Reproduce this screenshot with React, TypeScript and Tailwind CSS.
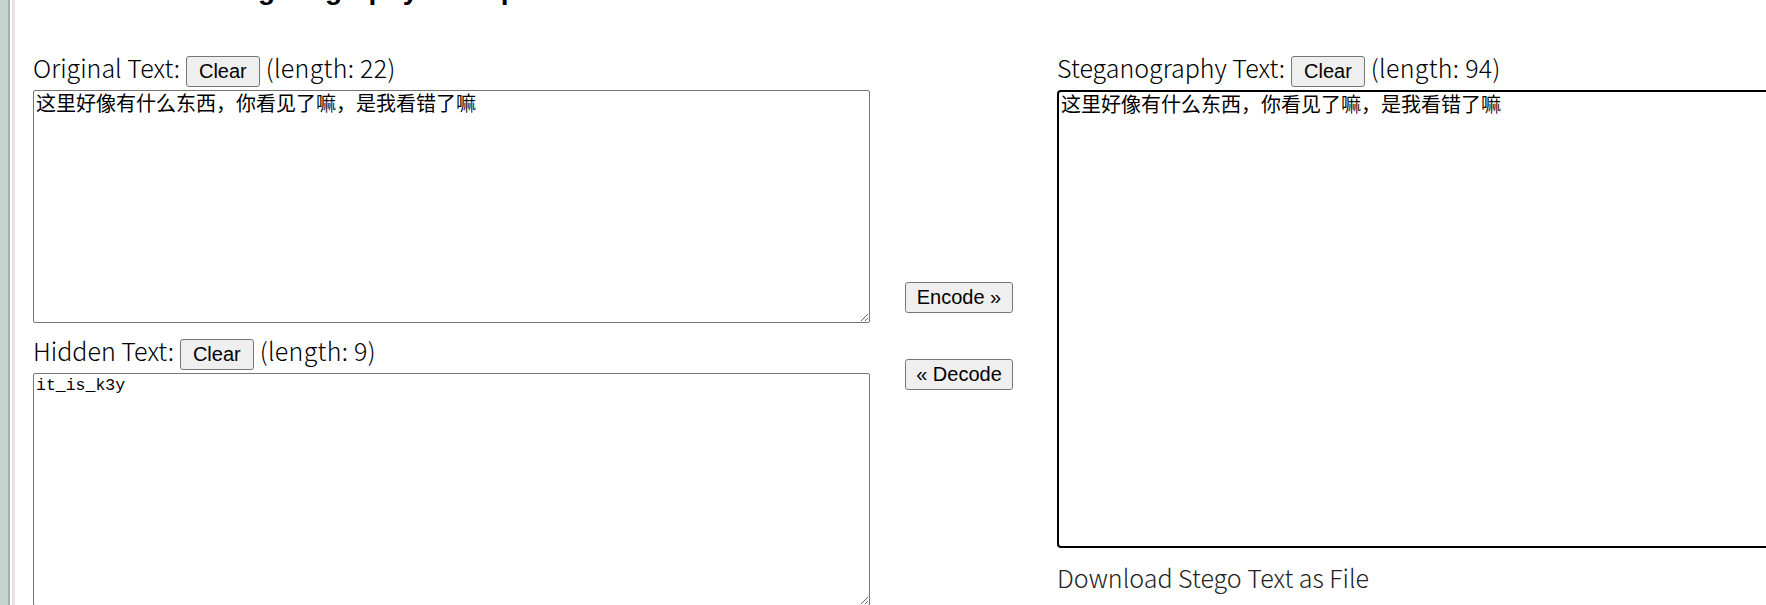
import { useState } from 'react';

const cjk = '"Noto Sans CJK JP", "Noto Sans CJK SC", sans-serif';

function ClearButton({ onClick }: { onClick?: () => void }) {
  return (
    <button
      onClick={onClick}
      className="h-[31px] px-[12px] py-[3px] leading-[23px] text-[20px] text-black bg-[#efefef] border border-[#767676] rounded-[3px] font-['Liberation_Sans',Arial,sans-serif]"
    >
      Clear
    </button>
  );
}

function LabelRow({ label, length, onClear }: { label: string; length: number; onClear: () => void }) {
  return (
    <div className="flex items-baseline gap-[6px] text-[25px] leading-[20px] font-light text-black" style={{ fontFamily: cjk }}>
      <span>{label}</span>
      <ClearButton onClick={onClear} />
      <span className="tracking-[0.3px]">(length: {length})</span>
    </div>
  );
}

export default function App() {
  const [original, setOriginal] = useState('这里好像有什么东西，你看见了嘛，是我看错了嘛');
  const [hidden, setHidden] = useState('it_is_k3y');
  const [stego, setStego] = useState('这里好像有什么东西，你看见了嘛，是我看错了嘛');

  return (
    <div className="flex h-[605px] w-[1766px] overflow-hidden bg-white">
      {/* window edge */}
      <div className="flex shrink-0">
        <div className="w-[8px] bg-[#c6d4d1]" />
        <div className="w-[2px] bg-[#a6b2af]" />
        <div className="w-[2px] bg-white" />
        <div className="w-[3px] bg-[#e4e4e4]" />
      </div>

      <div className="pl-[18px] -mt-[24px]">
        <h1 className="h-[28px] leading-[28px] text-[28px] font-bold text-black whitespace-nowrap font-['Liberation_Sans',Arial,sans-serif]">
          Unicode Text Steganography Example
        </h1>

        <div className="mt-[52px] flex items-start">
          {/* left column */}
          <div className="w-[837px] shrink-0">
            <LabelRow label="Original Text:" length={22} onClear={() => setOriginal('')} />
            <textarea
              value={original}
              onChange={e => setOriginal(e.target.value)}
              className="mt-[3px] block w-[837px] h-[233px] p-[2px] text-[20px] leading-[20px] text-black border border-[#767676] rounded-[2px] outline-none"
              style={{ fontFamily: cjk }}
            />

            <div className="mt-[16px]">
              <LabelRow label="Hidden Text:" length={9} onClear={() => setHidden('')} />
            </div>
            <textarea
              value={hidden}
              onChange={e => setHidden(e.target.value)}
              className="mt-[3px] block w-[837px] h-[233px] p-[2px] text-[16.5px] leading-[20px] text-black border border-[#767676] rounded-[2px] outline-none font-['Liberation_Mono',monospace]"
            />
          </div>

          {/* middle buttons */}
          <div className="ml-[35px] w-[108px] shrink-0 pt-[226px] flex flex-col font-['Liberation_Sans',Arial,sans-serif]">
            <button className="h-[31px] w-[108px] py-[3px] leading-[23px] text-[20px] text-black bg-[#efefef] border border-[#767676] rounded-[3px]">
              Encode »
            </button>
            <button className="mt-[46px] h-[31px] w-[108px] py-[3px] leading-[23px] text-[20px] text-black bg-[#efefef] border border-[#767676] rounded-[3px]">
              « Decode
            </button>
          </div>

          {/* right column */}
          <div className="ml-[44px] w-[837px] shrink-0">
            <LabelRow label="Steganography Text:" length={94} onClear={() => setStego('')} />
            <textarea
              value={stego}
              onChange={e => setStego(e.target.value)}
              className="mt-[3px] block w-[837px] h-[458px] p-[2px] text-[20px] leading-[20px] text-black border-2 border-black rounded-[4px] outline-none"
              style={{ fontFamily: cjk }}
            />
            <div className="mt-[14px] text-[25px] leading-[30px] font-light text-[#222]" style={{ fontFamily: cjk }}>
              Download Stego Text as File
            </div>
          </div>
        </div>
      </div>
    </div>
  );
}
